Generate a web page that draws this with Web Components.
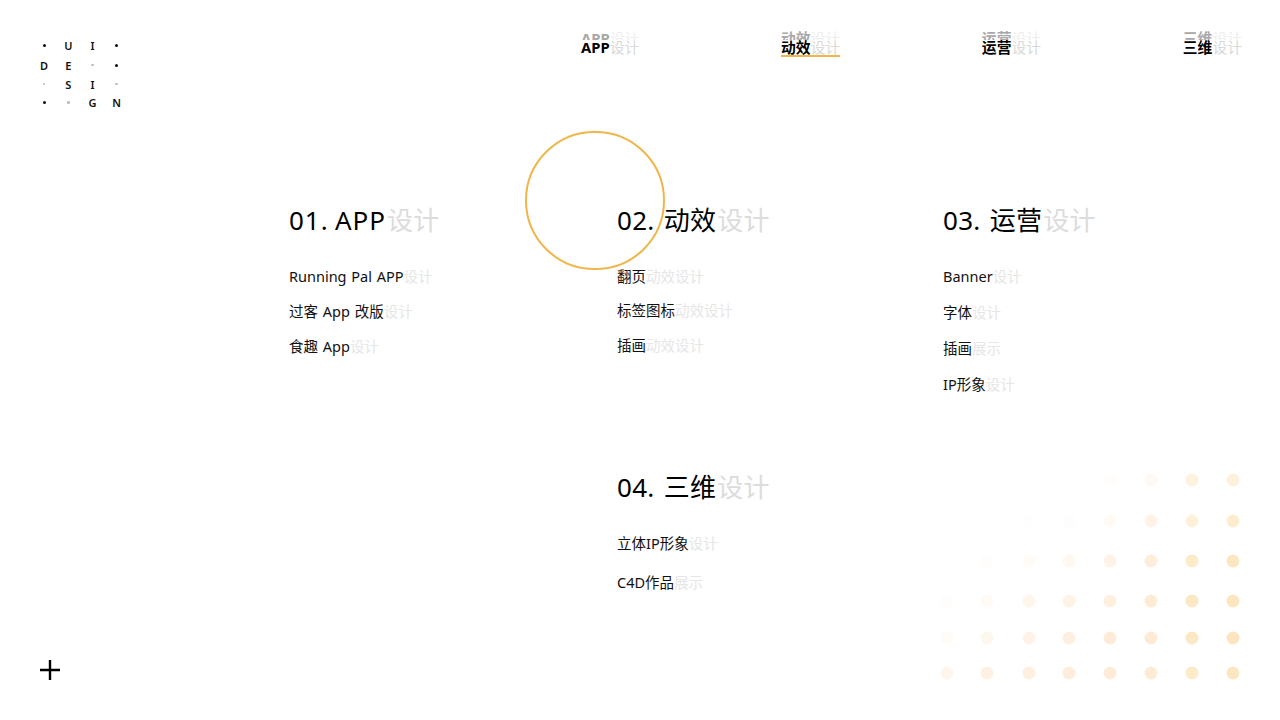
<!DOCTYPE html>
<html lang="zh-CN"><head><meta charset="utf-8"><title>UI Design</title>
<style>
html,body{margin:0;padding:0;background:#fff}
body{font-family:"Noto Sans","Noto Sans CJK SC",sans-serif;color:#000}
</style></head><body>
<ui-page>
  <site-header slot="header"></site-header>
  <topic-grid>
    <topic-block style="--gap:35px;--ls:1px;--ws:-1.5px" heading="01. APP" rest="设计">
      <topic-link rest="设计">Running Pal APP</topic-link>
      <topic-link rest="设计">过客 App 改版</topic-link>
      <topic-link rest="设计">食趣 App</topic-link>
    </topic-block>
    <topic-block style="--gap:34.5px" heading="02. 动效" rest="设计">
      <topic-link rest="动效设计">翻页</topic-link>
      <topic-link rest="动效设计">标签图标</topic-link>
      <topic-link rest="动效设计">插画</topic-link>
    </topic-block>
    <topic-block style="--gap:36px;--first:.5px" heading="03. 运营" rest="设计">
      <topic-link rest="设计">Banner</topic-link>
      <topic-link rest="设计">字体</topic-link>
      <topic-link rest="展示">插画</topic-link>
      <topic-link rest="设计">IP形象</topic-link>
    </topic-block>
    <topic-block style="--gap:39px;grid-column:2" heading="04. 三维" rest="设计">
      <topic-link rest="设计">立体IP形象</topic-link>
      <topic-link rest="展示">C4D作品</topic-link>
    </topic-block>
  </topic-grid>
  <plus-button></plus-button>
  <ring-mark></ring-mark>
  <dot-field></dot-field>
</ui-page>
<script>
function def(name, css, html, init){
  customElements.define(name, class extends HTMLElement{
    constructor(){super();const r=this.attachShadow({mode:'open'});r.innerHTML='<style>'+css+'</style>'+html;}
    connectedCallback(){ if(init) init.call(this,this.shadowRoot); }
  });
}
def('ui-page',`:host{display:flex;flex-direction:column;position:relative;width:1280px;height:720px;overflow:hidden;background:#fff}`,
  `<slot name="header"></slot><slot></slot>`);

def('ui-logo',`:host{display:grid;grid-template-columns:repeat(4,24.2px);grid-template-rows:19.5px 19px 18.5px 19px;font:600 11px/19px "Noto Sans",sans-serif;color:#111;text-align:center;width:98px;margin-left:-8px}
 i{display:block;width:3px;height:3px;border-radius:50%;background:#111;margin:8px auto}
 i.g{background:#bdbdbd;width:2.6px;height:2.6px}`,
 `<i></i><span>U</span><span>I</span><i></i>
  <span>D</span><span>E</span><i class="g"></i><i></i>
  <i class="g"></i><span>S</span><span>I</span><i class="g"></i>
  <i></i><i class="g"></i><span>G</span><span>N</span>`);

def('nav-item',`:host{display:block;position:relative;font:700 14.8px/15px "Noto Sans","Noto Sans CJK SC",sans-serif;color:#000}
 .ghost{position:absolute;left:0;top:-9px;color:#a8a8a8;white-space:nowrap}
 .main{position:relative;display:block;background:#fff;padding:0 0 1px;white-space:nowrap}
 .main.on{border-bottom:2px solid #f0b64a;padding-bottom:0}
 .rest{color:#d9d9d9;font-weight:400}
 .ghost .rest{color:#eee}`,
 `<span class="ghost"><span class="a"></span><span class="rest"></span></span><span class="main"><span class="a"></span><span class="rest"></span></span>`,
 function(r){
   r.querySelectorAll('.a').forEach(e=>e.textContent=this.getAttribute('label'));
   r.querySelectorAll('.rest').forEach(e=>e.textContent=this.getAttribute('rest'));
   if(this.hasAttribute('active')) r.querySelector('.main').classList.add('on');
 });

def('site-header',`:host{display:flex;justify-content:space-between;align-items:flex-start;padding:0 38px 0 40px;height:128px}
 .logo{padding-top:36px}
 nav{display:flex;justify-content:space-between;width:661px;padding-top:40px}`,
 `<div class="logo"><ui-logo></ui-logo></div>
  <nav><nav-item label="APP" rest="设计"></nav-item><nav-item active label="动效" rest="设计"></nav-item><nav-item label="运营" rest="设计"></nav-item><nav-item label="三维" rest="设计"></nav-item></nav>`);

def('topic-grid',`:host{display:grid;grid-template-columns:328px 326px 1fr;grid-template-rows:267px auto;padding:0 0 0 289px;margin-top:72px}`,`<slot></slot>`);

def('topic-block',`:host{display:flex;flex-direction:column;align-items:flex-start}
 h2{margin:0 0 24.5px;font:400 26px/40px "Noto Sans","Noto Sans CJK SC",sans-serif;letter-spacing:var(--ls,.3px);word-spacing:var(--ws,2px);color:#000;white-space:pre}
 h2 span{color:#dcdcdc;margin-left:1px;letter-spacing:.3px}
 .list{display:flex;flex-direction:column;gap:calc(var(--gap) - 22px);padding-top:var(--first,0)}`,
 `<h2><span class="r"></span></h2><div class="list"><slot></slot></div>`,
 function(r){const h=r.querySelector('h2');h.insertBefore(document.createTextNode(this.getAttribute('heading')),h.firstChild);r.querySelector('.r').textContent=this.getAttribute('rest');});

def('topic-link',`:host{display:block;font:400 14.5px/22px "Noto Sans","Noto Sans CJK SC",sans-serif;word-spacing:1px;color:#111;white-space:pre}
 span{color:#e6e6e6}`,`<slot></slot><span></span>`,
 function(r){r.querySelector('span').textContent=this.getAttribute('rest');});

def('plus-button',`:host{display:block;position:absolute;left:40px;top:660px;width:20px;height:20px}
 svg{display:block}`,`<svg width="20" height="20" viewBox="0 0 20 20"><path d="M0 10H20M10 0V20" stroke="#000" stroke-width="2.4" fill="none"/></svg>`);

def('ring-mark',`:host{display:block;position:absolute;left:525px;top:130.5px;width:139.5px;height:139.5px;box-sizing:border-box;border:2px solid #f0b64a;border-radius:50%}`,``);

def('dot-field',`:host{display:block;position:absolute;left:930px;top:460px;width:320px;height:230px}svg{display:block}`,
 `<svg width="320" height="230" viewBox="930 460 320 230"></svg>`,
 function(r){
  const xs=[947,987,1029,1069,1110,1151,1192,1233], ys=[480,521,561,601,638,673];
  const m=[[0,0,0,0,.08,.22,.5,.55],[0,0,.02,.06,.2,.45,.6,.75],[0,.06,.15,.25,.45,.65,.85,.95],[.06,.2,.35,.45,.6,.75,.9,1],[.12,.3,.45,.55,.7,.75,.9,1],[.35,.5,.6,.65,.7,.75,.85,.95]];
  let s='';
  ys.forEach((y,j)=>xs.forEach((x,i)=>{if(m[j][i])s+=`<circle cx="${x}" cy="${y}" r="6.5" fill="${i>5?'#fde6bf':'#fde4c8'}" opacity="${m[j][i]}"/>`;}));
  r.querySelector('svg').innerHTML=s;
 });
</script>
</body></html>
